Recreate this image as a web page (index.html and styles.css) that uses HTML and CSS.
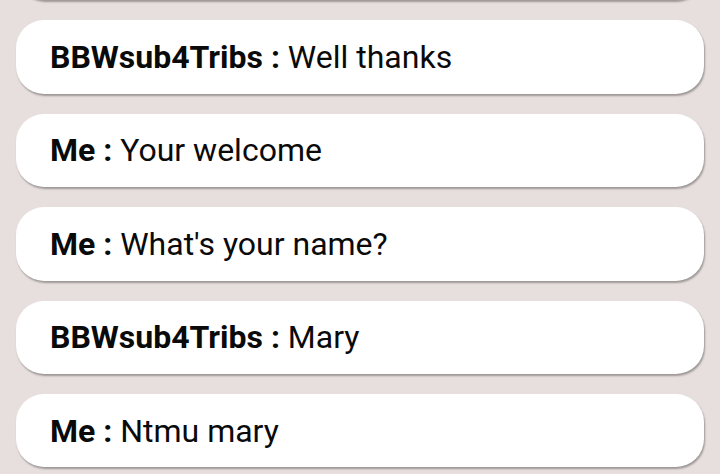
FILE: index.html
```html
<!DOCTYPE html>
<html lang="en">
<head>
<meta charset="utf-8">
<title>Chat</title>
<link rel="stylesheet" href="styles.css">
</head>
<body>
<div class="list">
  <div class="msg msg-partial"></div>
  <div class="msg"><span class="who">BBWsub4Tribs :</span>&nbsp;<span class="text">Well thanks</span></div>
  <div class="msg"><span class="who">Me :</span>&nbsp;<span class="text">Your welcome</span></div>
  <div class="msg"><span class="who">Me :</span>&nbsp;<span class="text">What's your name?</span></div>
  <div class="msg"><span class="who">BBWsub4Tribs :</span>&nbsp;<span class="text">Mary</span></div>
  <div class="msg"><span class="who">Me :</span>&nbsp;<span class="text">Ntmu mary</span></div>
</div>
</body>
</html>
```
FILE: styles.css
```css
html, body {
  margin: 0;
  padding: 0;
  background: #e7dfde;
  height: 100%;
  overflow: hidden;
}
.list {
  display: flex;
  flex-direction: column;
  gap: 20px;
  padding: 0 16px 0 16px;
  margin-top: -73px;
  font-family: Roboto, "Liberation Sans", sans-serif;
}
.msg {
  height: 73.4px;
  box-sizing: border-box;
  display: flex;
  align-items: center;
  padding-left: 34px;
  background: #ffffff;
  border-radius: 28px;
  box-shadow: 1px 2px 2px rgba(0, 0, 0, 0.32);
  font-size: 32px;
  color: #0a0a0a;
  white-space: nowrap;
}
.who {
  font-weight: bold;
}
.text {
  font-weight: normal;
}
```
